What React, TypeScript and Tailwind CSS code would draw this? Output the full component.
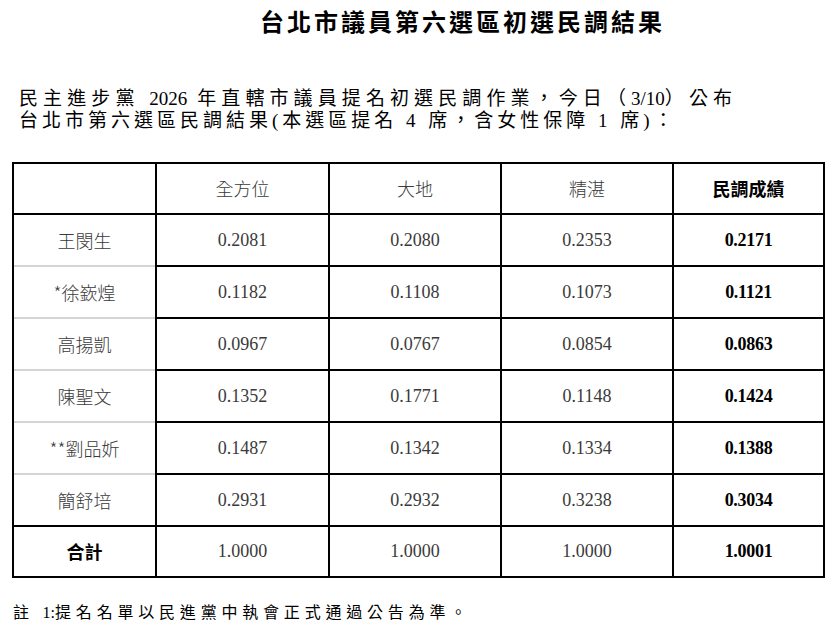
const rows = [
  { name: "王閔生", a: "0.2081", b: "0.2080", c: "0.2353", score: "0.2171" },
  { name: "*徐嶔煌", a: "0.1182", b: "0.1108", c: "0.1073", score: "0.1121" },
  { name: "高揚凱", a: "0.0967", b: "0.0767", c: "0.0854", score: "0.0863" },
  { name: "陳聖文", a: "0.1352", b: "0.1771", c: "0.1148", score: "0.1424" },
  { name: "**劉品妡", a: "0.1487", b: "0.1342", c: "0.1334", score: "0.1388" },
  { name: "簡舒培", a: "0.2931", b: "0.2932", c: "0.3238", score: "0.3034" },
];

const serif = "font-['Liberation_Serif','Noto_Sans_CJK_TC',serif]";
const cjk = "font-['Noto_Sans_CJK_TC',sans-serif]";

function NumCell({ value, bold }: { value: string; bold?: boolean }) {
  return (
    <td
      className={
        bold
          ? "border-2 border-black text-center text-[18px] tracking-[-0.3px] font-bold text-black font-['Liberation_Serif',serif]"
          : "border-2 border-black text-center text-[18px] text-[#3a3a3a] font-['Liberation_Serif',serif]"
      }
    >
      {value}
    </td>
  );
}

export default function App() {
  return (
    <div className="w-[836px] h-[624px] bg-white overflow-hidden text-black">
      <h1
        className={`${cjk} pt-[5px] pl-[260px] text-[24px] leading-[32px] font-bold tracking-[3px] whitespace-nowrap`}
      >
        台北市議員第六選區初選民調結果
      </h1>

      <div className={`${serif} mt-[51px] pl-[19px] text-[19px] leading-[22px] whitespace-nowrap`}>
        <p className="tracking-[5.1px]">
          民主進步黨 <span className="tracking-[0px]">2026</span> 年直轄市議員提名初選民調作業，今日（
          <span className="tracking-[0px]">3/10</span>）公布
        </p>
        <p className="tracking-[4px]">
          台北市第六選區民調結果(本選區提名 4 席，含女性保障 1 席)：
        </p>
      </div>

      <div className="mt-[30px] pl-[12px]">
        <table className="w-[811px] table-fixed border-collapse border-2 border-black">
          <colgroup>
            <col className="w-[143px]" />
            <col className="w-[173px]" />
            <col className="w-[172px]" />
            <col className="w-[172px]" />
            <col className="w-[151px]" />
          </colgroup>
          <thead>
            <tr className="h-[51px]">
              <th className="border-2 border-black" />
              <th className={`${cjk} border-2 border-black text-[18px] font-light text-[#3a3a3a]`}>全方位</th>
              <th className={`${cjk} border-2 border-black text-[18px] font-light text-[#3a3a3a]`}>大地</th>
              <th className={`${cjk} border-2 border-black text-[18px] font-light text-[#3a3a3a]`}>精湛</th>
              <th className={`${cjk} border-2 border-black text-[18px] font-bold`}>民調成績</th>
            </tr>
          </thead>
          <tbody>
            {rows.map((r, i) => (
              <tr
                key={r.name}
                className={
                  i < rows.length - 1
                    ? "h-[52px] border-b-2 border-b-[#d4d4d4]"
                    : "h-[52px]"
                }
              >
                <td className={`${cjk} border-x-2 border-black text-center text-[18px] font-light text-[#3a3a3a]`}>
                  {r.name}
                </td>
                <NumCell value={r.a} />
                <NumCell value={r.b} />
                <NumCell value={r.c} />
                <NumCell value={r.score} bold />
              </tr>
            ))}
            <tr className="h-[51px] border-t-2 border-black">
              <td className={`${cjk} border-2 border-black text-center text-[18px] font-bold`}>合計</td>
              <NumCell value="1.0000" />
              <NumCell value="1.0000" />
              <NumCell value="1.0000" />
              <NumCell value="1.0001" bold />
            </tr>
          </tbody>
        </table>
      </div>

      <p className={`${serif} mt-[25px] pl-[13px] text-[16px] leading-[20px] tracking-[4.8px] whitespace-nowrap`}>
        註 <span className="tracking-[0px]">1:</span>提名名單以民進黨中執會正式通過公告為準。
      </p>
    </div>
  );
}
